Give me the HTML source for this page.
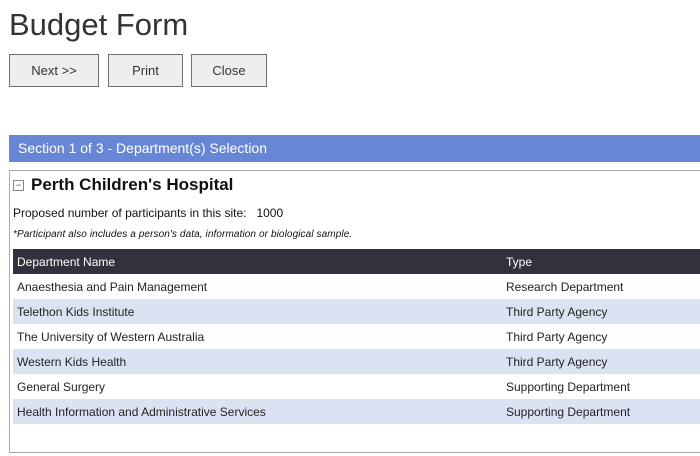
<!DOCTYPE html>
<html><head><style>
body{margin:0;width:700px;height:456px;overflow:hidden;background:#fff;font-family:"Liberation Sans",sans-serif;color:#222;position:relative}
.a{position:absolute}
h1{position:absolute;left:9px;top:7px;margin:0;font-weight:normal;font-size:31px;color:#333}
.btn{position:absolute;top:54px;border:1px solid #707070;background:#eee;font-size:13px;color:#333;text-align:center;line-height:31px;box-sizing:border-box;height:33px}
.sec{left:9px;top:135px;width:691px;height:27px;background:#6787d6;color:#fff;font-size:14px;line-height:27px;padding-left:9px;box-sizing:border-box}
.panel{left:9px;top:170px;width:700px;height:283px;border:1px solid #aaa;box-sizing:border-box}
table{position:absolute;left:13px;top:249px;width:687px;border-collapse:collapse;font-size:12px}
td,th{height:25px;padding:0 0 0 4px;text-align:left;font-weight:normal}
th{background:#32323e;color:#fff}
tr.e td{background:#dbe3f3}
</style></head><body>
<h1>Budget Form</h1>
<div class="btn" style="left:9px;width:90px">Next &gt;&gt;</div>
<div class="btn" style="left:108px;width:75px">Print</div>
<div class="btn" style="left:191px;width:76px">Close</div>
<div class="a sec">Section 1 of 3 - Department(s) Selection</div>
<div class="a panel"></div>
<div class="a" style="left:13px;top:180px;width:9px;height:9px;border:1px solid #888;font-size:9px;line-height:8px;text-align:center;color:#333">−</div>
<div class="a" style="left:31px;top:175px;font-size:17px;font-weight:bold;color:#111">Perth Children's Hospital</div>
<div class="a" style="left:13px;top:206px;font-size:12px;color:#111">Proposed number of participants in this site:&nbsp;&nbsp; 1000</div>
<div class="a" style="left:13px;top:229px;font-size:10px;font-style:italic;color:#111;letter-spacing:0.1px">*Participant also includes a person's data, information or biological sample.</div>
<table>
<tr><th style="width:485px">Department Name</th><th>Type</th></tr>
<tr><td>Anaesthesia and Pain Management</td><td>Research Department</td></tr>
<tr class="e"><td>Telethon Kids Institute</td><td>Third Party Agency</td></tr>
<tr><td>The University of Western Australia</td><td>Third Party Agency</td></tr>
<tr class="e"><td>Western Kids Health</td><td>Third Party Agency</td></tr>
<tr><td>General Surgery</td><td>Supporting Department</td></tr>
<tr class="e"><td>Health Information and Administrative Services</td><td>Supporting Department</td></tr>
</table>
</body></html>
